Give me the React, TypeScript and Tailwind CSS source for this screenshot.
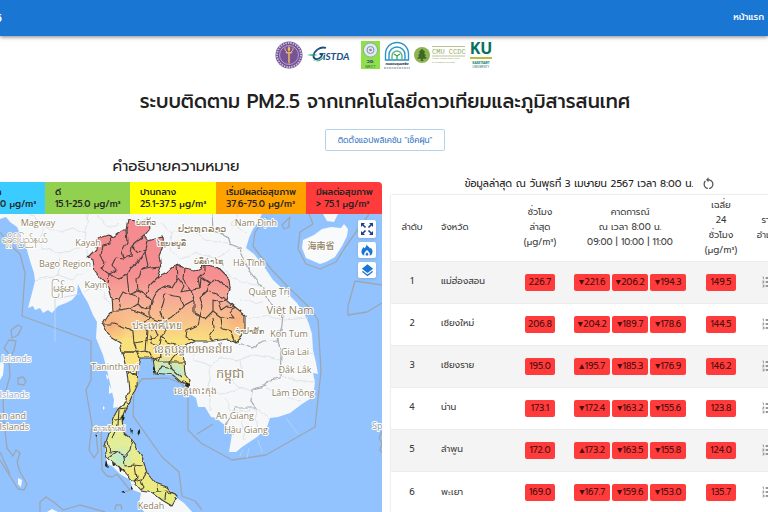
import { MdLayers, MdFormatListNumbered, MdRestartAlt } from "react-icons/md";
import { FaTree } from "react-icons/fa";

const levels = [
  { name: "ดีมาก", range: "0-15.0 μg/m³", color: "w-[75px] bg-[#3bccff]" },
  { name: "ดี", range: "15.1-25.0 μg/m³", color: "w-[85px] bg-[#92d050]" },
  { name: "ปานกลาง", range: "25.1-37.5 μg/m³", color: "w-[86px] bg-[#ffff00]" },
  { name: "เริ่มมีผลต่อสุขภาพ", range: "37.6-75.0 μg/m³", color: "w-[90px] bg-[#ffa200]" },
  { name: "มีผลต่อสุขภาพ", range: "> 75.1 μg/m³", color: "grow bg-[#ff3b3b]" },
];

const provinces = [
  { name: "แม่ฮ่องสอน", now: "226.7", next: ["▼221.6", "▼206.2", "▼194.3"], avg: "149.5" },
  { name: "เชียงใหม่", now: "206.8", next: ["▼204.2", "▼189.7", "▼178.6"], avg: "144.5" },
  { name: "เชียงราย", now: "195.0", next: ["▲195.7", "▼185.3", "▼176.9"], avg: "146.2" },
  { name: "น่าน", now: "173.1", next: ["▼172.4", "▼163.2", "▼155.6"], avg: "123.8" },
  { name: "ลำพูน", now: "172.0", next: ["▲173.2", "▼163.5", "▼155.8"], avg: "124.0" },
  { name: "พะเยา", now: "169.0", next: ["▼167.7", "▼159.6", "▼153.0"], avg: "135.7" },
];

const seas = [
  // Bay of Bengal and Andaman Sea
  "M-30 214 L0 214 L0 219 L6 217 L10 222 L17 227 L21 236 L20 241 L26 246 L28 254 L31 264 L34 273 L35 281 L32 293 L28 308 L33 306 L35 310 L40 308 L43 313 L48 310 L52 313 L58 306 L66 303 L72 300 L77 294 L78 284 L82 293 L88 303 L93 315 L97 322 L96 338 L103 355 L107 370 L111 388 L114 400 L113 408 L118 407 L113 418 L109 432 L105 446 L107 464 L112 466 L120 474 L130 480 L133 490 L141 493 L139 503 L144 512 L-30 512Z",
  // Gulf of Thailand and South China Sea
  "M262 214 L258 222 L253 229 L249 238 L246 248 L254 254 L265 268 L273 280 L287 293 L297 303 L305 315 L309 324 L312 334 L313 350 L316 363 L318 374 L313 373 L315 382 L313 397 L302 404 L290 413 L278 417 L270 418 L267 427 L257 437 L242 447 L236 452 L229 452 L232 434 L227 427 L216 418 L211 417 L205 407 L198 407 L196 398 L190 394 L188 387 L182 383 L173 375 L155 373 L153 358 L140 358 L138 368 L137 385 L128 405 L122 420 L124 433 L132 440 L137 448 L143 460 L147 473 L155 483 L167 487 L177 498 L184 503 L194 514 L382 514 L382 214 L338 214 L334 222 L327 221 L323 214Z",
];

const thailand =
  "M128 220 L138 221 L148 220 L149 230 L144 236 L148 241 L162 237 L163 246 L159 256 L161 267 L157 278 L167 273 L177 264 L184 269 L195 271 L205 265 L217 267 L224 274 L229 279 L230 288 L227 300 L235 307 L245 315 L245 328 L242 337 L235 343 L228 339 L213 341 L195 341 L183 347 L184 362 L185 373 L190 380 L188 387 L182 383 L173 375 L155 373 L153 358 L140 358 L138 368 L137 385 L128 405 L122 420 L124 433 L132 440 L137 448 L143 460 L147 473 L155 483 L167 487 L177 497 L172 506 L162 500 L153 493 L141 491 L133 482 L125 472 L118 466 L110 460 L106 455 L105 446 L109 432 L113 418 L118 409 L125 403 L129 390 L127 373 L122 352 L120 343 L110 337 L103 324 L108 316 L113 311 L112 298 L108 284 L100 278 L95 272 L93 260 L88 257 L96 249 L97 238 L109 234 L112 237 L122 230 L126 230Z";

const provinceLines = [
  "M126 230 L127 242 L122 251 L124 258 L131 256 L132 246 L144 236",
  "M132 246 L138 252 L146 249 L148 241",
  "M110 235 L111 244 L103 246 L101 255 L105 263 L101 268 L109 274 L108 284",
  "M124 258 L116 257 L112 265 L116 271 L109 274 L119 279 L127 275 L131 268 L138 262 L145 252 L146 249",
  "M145 252 L148 266 L142 270 L137 280 L138 291 L129 295 L127 275",
  "M161 267 L151 268 L142 270",
  "M157 278 L149 286 L146 295 L138 291",
  "M112 300 L119 299 L123 292 L129 295 L139 298 L138 304 L142 308 L150 307 L151 300 L146 295",
  "M119 299 L121 311 L130 309 L138 304 M121 311 L113 311",
  "M130 309 L141 313 L150 318 L150 307 L154 297 L158 290 L165 286 L172 288 L178 278 L177 264",
  "M165 294 L163 304 L160 312 L164 322 L150 318",
  "M165 294 L180 297 L183 306 L176 315 L164 322",
  "M178 278 L184 286 L181 292 L191 290 L194 300 L183 306",
  "M184 269 L183 280 L191 290 L200 289 L198 278 L205 271 L205 265",
  "M200 289 L201 277 L210 283 L216 279 L224 285 L230 288",
  "M210 283 L207 291 L200 298 L203 306 L200 316 L194 313 L194 300",
  "M207 291 L216 294 L227 300 L218 302 L213 300 L213 311 L205 319 L200 316",
  "M218 302 L221 310 L227 306 L235 307 L230 313 L234 318 L221 317 L213 311",
  "M221 317 L222 328 L230 331 L235 343",
  "M213 317 L214 328 L209 336 L213 341",
  "M200 316 L198 325 L187 330 L186 337 L195 341",
  "M164 322 L165 332 L161 337 L168 343 L183 347",
  "M103 324 L113 324 L122 327 L133 332 L134 343 L146 341 L147 331 L142 325 L150 318",
  "M147 331 L155 329 L158 336 L146 341 L145 350 L134 352 L122 352",
  "M145 350 L153 358 L160 356 L158 346 L161 337",
  "M134 343 L137 351 L140 358 M158 346 L151 343 L150 335 M153 349 L164 350",
  "M160 356 L158 362 L153 358 M158 362 L170 362 L173 357 L183 347",
  "M170 362 L172 369 L163 367 L156 373 M172 369 L182 378 M170 362 L184 362",
  "M122 352 L138 352 M127 373 L138 375 M126 404 L128 405",
  "M129 373 L138 374 M118 409 L126 408 M114 420 L122 419 M119 410 L118 425 L112 438",
  "M108 441 L110 452 L118 451 L124 457 L130 450 L132 440",
  "M118 451 L112 455 L108 458 M124 457 L125 466 L133 465 L143 466",
  "M135 466 L137 478 L133 482 L141 480 L146 472 M141 480 L144 487 L141 491",
  "M157 485 L158 491 L166 490 L165 500 M158 491 L153 493 M166 490 L172 494",
];

const seaBorders = [
  "M0 232 L8 243 L20 254 L25 273 L22 316 L91 341 L91 380 L86 390 L92 425 L89 450 L94 458 L98 452 L96 434 L101 430 L102 470 L107 476 L112 477 L117 474 L130 490 L123 492",
  "M12 338 L11 330 L18 325 L22 327 L18 335Z",
  "M9 354 L4 348 L9 340 L16 341 L14 350 L9 361 L10 376 L3 401 L4 422 L7 448 L13 456 L16 450 L20 453 L17 462 L20 472 L27 484 L24 490 L18 489 L0 460",
  "M18 384 L18 378 L23 377 L26 381 L24 385Z M0 452 L10 474",
  "M40 512 L40 502 L46 497 L55 503 L63 510 L80 505 L105 512 M115 510 L116 505 L121 505 L122 510",
  "M182 496 L179 472 L162 457 L150 440 L133 416 L134 390 L142 379 L168 378 L182 384 L188 392 L188 430 L201 443 L232 460 L266 455 L315 427 L321 371 L318 320 L310 308 L288 287 L272 270 L259 254 L253 246 L255 232 L267 217",
  "M182 496 L195 501 L202 510",
  "M197 434 L213 424 M290 217 L286 221 L282 225 L284 229 L289 227 L289 223Z",
  "M309 214 L313 224 L300 232 L298 249 L306 264 L320 269 L336 262 L346 246 L369 214",
  "M355 281 L348 306 L348 315 L367 312 L382 303 M355 281 L382 285",
  "M382 431 L379 438 L382 443 L380 450 L382 453",
];

const landBorders = [
  "M212 214 L213 230 L228 236 L230 244 L240 248 L245 262 L250 272 L257 281 L264 290 L270 303 L283 312 L282 326 L278 339 L281 355 L280 378 L270 380 L266 385 L252 390 L251 401 L256 408 L251 408 L236 408 L226 424",
  "M235 343 L247 345 L252 348 L262 342 L277 341 L279 330",
];

const thinBorders = [
  "M30 214 L42 226 L60 232 L73 228 L86 233 M42 226 L42 248 L60 253 L80 248",
  "M60 253 L58 275 L72 280 L88 270 M88 214 L85 240 L88 257 M98 214 L108 228 L120 224",
  "M35 280 L60 275 M84 292 L95 285 L103 293 L110 306 M160 222 L172 232 L190 228 L205 240 L228 244",
  "M172 232 L170 250 L181 259 L195 253 L215 258 L230 250 M215 258 L235 280 L260 286",
  "M237 214 L232 225 L247 233 M240 300 L262 303 M245 318 L265 316 L285 320 L308 318",
  "M195 341 L194 360 L210 365 L220 358 L240 360 L255 355 L280 360 M210 365 L208 388 L222 395 L240 388 L252 392",
  "M240 360 L242 375 L232 380 L240 388 M281 352 L300 350 L313 354 M281 375 L295 380 L315 382 M265 388 L283 395 L302 402",
  "M225 398 L230 410 L245 412 L256 408 L270 418 M240 412 L245 440 M210 390 L210 410 M255 408 L258 432",
];

const labels = [
  { x: 38, y: 226, t: "Magway", size: 9 },
  { x: 24, y: 243, t: "ရခိုင်ပြည်နယ်", size: 10 },
  { x: 88, y: 246, t: "Kayah", size: 9 },
  { x: 65, y: 267, t: "Bago Region", size: 9 },
  { x: 62, y: 292, t: "မြန်မာ", size: 12 },
  { x: 96, y: 288, t: "Kayin", size: 9 },
  { x: 146, y: 225, t: "ບໍ່ແກ້ວ", size: 8 },
  { x: 171, y: 246, t: "ໄຊຍະບູລີ", size: 8 },
  { x: 202, y: 232, t: "ປະເທດລາວ", size: 10 },
  { x: 208, y: 264, t: "ບໍລິຄຳໄຊ", size: 8 },
  { x: 256, y: 226, t: "Nam Định", size: 9 },
  { x: 249, y: 266, t: "Hà Tĩnh", size: 9 },
  { x: 269, y: 295, t: "Quảng Trị", size: 9 },
  { x: 290, y: 314, t: "Việt Nam", size: 11 },
  { x: 321, y: 249, t: "海南省", size: 9 },
  { x: 157, y: 329, t: "ประเทศไทย", size: 10 },
  { x: 249, y: 334, t: "ຈຳປາສັກ", size: 8 },
  { x: 289, y: 337, t: "Kon Tum", size: 9 },
  { x: 193, y: 353, t: "ខេត្តបន្ទាយមានជ័យ", size: 11 },
  { x: 295, y: 355, t: "Gia Lai", size: 9 },
  { x: 295, y: 373, t: "Đắk Lắk", size: 9 },
  { x: 230, y: 378, t: "កម្ពុជា", size: 13 },
  { x: 115, y: 370, t: "Tanintharyi", size: 9 },
  { x: 195, y: 394, t: "ខេត្តកោះកុង", size: 9 },
  { x: 293, y: 396, t: "Lâm Đồng", size: 9 },
  { x: 235, y: 419, t: "An Giang", size: 9 },
  { x: 246, y: 433, t: "Hậu Giang", size: 9 },
  { x: 109, y: 431, t: "อ่าวเจ้าเลย์", size: 7 },
  { x: 151, y: 509, t: "Kedah", size: 9 },
];

const MapView = () => (
  <svg
    viewBox="-30 214 412 298"
    preserveAspectRatio="xMidYMin slice"
    className="block w-full font-['Open_Sans','Noto_Sans','Noto_Sans_CJK_SC',sans-serif]"
  >
    <defs>
      <linearGradient id="pm" gradientUnits="userSpaceOnUse" x1="0" y1="220" x2="0" y2="500">
        <stop offset="0" stopColor="#f28a8f" />
        <stop offset="0.2" stopColor="#f68f91" />
        <stop offset="0.28" stopColor="#f7aa98" />
        <stop offset="0.36" stopColor="#f8c38a" />
        <stop offset="0.43" stopColor="#f9e07c" />
        <stop offset="0.6" stopColor="#f9e878" />
        <stop offset="0.8" stopColor="#e2ee98" />
        <stop offset="0.9" stopColor="#f2ea80" />
        <stop offset="1" stopColor="#e4ec80" />
      </linearGradient>
      <radialGradient id="clean">
        <stop offset="0" stopColor="#b4eadb" />
        <stop offset="1" stopColor="#b4eadb" stopOpacity="0" />
      </radialGradient>
      <radialGradient id="warm">
        <stop offset="0" stopColor="#f6a578" />
        <stop offset="1" stopColor="#f6a578" stopOpacity="0" />
      </radialGradient>
      <filter id="rough" x="-5%" y="-5%" width="110%" height="110%" colorInterpolationFilters="sRGB">
        <feTurbulence type="fractalNoise" baseFrequency="0.15" numOctaves="1" seed="4" />
        <feDisplacementMap in="SourceGraphic" scale="5" xChannelSelector="R" yChannelSelector="G" />
      </filter>
      <clipPath id="country">
        <path d={thailand} />
      </clipPath>
    </defs>
    <rect x="-30" y="214" width="412" height="298" fill="#f5f7f9" />
    <g fill="#92c3ff">
      {seas.map((d) => (
        <path key={d} d={d} />
      ))}
    </g>
    <g fill="#f8fafb">
      <path d="M303 240 L314 235 L322 229 L331 227 L341 228 L344 224 L348 229 L347 236 L342 246 L335 257 L326 262 L320 264 L306 258 L302 248Z" />
      <path d="M0 362 L4 364 L3 375 L0 380Z M18 478 L22 480 L21 487 L18 484Z M47 512 L52 509 L58 512Z" />
      <path d="M106 374 L109 377 L107 380Z M109 385 L113 392 L109 394Z M103 406 L105 408 L103 410Z" />
    </g>
    <g fill="none" stroke="#dfe3e7" strokeWidth="1" filter="url(#rough)">
      {thinBorders.map((d) => (
        <path key={d} d={d} />
      ))}
    </g>
    <g fill="none" stroke="#9ca6b3" strokeWidth="1.3" strokeLinejoin="round">
      {seaBorders.map((d) => (
        <path key={d} d={d} />
      ))}
    </g>
    <path
      d="M55 298 L55 342 M55 299 L80 294 M286 418 L298 434 M243 450 L240 456 M258 440 L262 452 M249 448 L247 458"
      fill="none"
      stroke="#bcd6f5"
      strokeWidth="0.8"
    />
    <g fill="none" stroke="#a9acb2" strokeWidth="1.2" filter="url(#rough)">
      {landBorders.map((d) => (
        <path key={d} d={d} />
      ))}
    </g>
    <g filter="url(#rough)">
      <path d={thailand} fill="url(#pm)" />
      <g clipPath="url(#country)">
        <circle cx="164" cy="370" r="16" fill="url(#clean)" />
        <circle cx="178" cy="372" r="12" fill="url(#clean)" />
        <circle cx="120" cy="458" r="14" fill="url(#clean)" />
        <circle cx="112" cy="326" r="18" fill="url(#warm)" opacity="0.7" />
        <circle cx="238" cy="322" r="16" fill="url(#warm)" opacity="0.6" />
      </g>
      <g fill="none" stroke="#47403c" strokeWidth="1.1" strokeLinejoin="round">
        <path d={thailand} />
        {provinceLines.map((d) => (
          <path key={d} d={d} />
        ))}
      </g>
      <g fill="#20241f">
        <path d="M138 431 L140 429 L140 433 L137 437Z M131 429 L133 430 L132 435Z M106 460 L108 468 L105 466Z" />
        <path d="M119 466 L123 471 L120 472Z M123 491 L125 491 L125 493 L121 492Z M131 484 L133 491 L131 489Z M112 462 L116 465 L113 466Z" />
        <path d="M123 416 L125 414 L124 421 L122 422Z M96 435 L98 435 L98 437Z M153 366 L155 370 L153 374Z M183 381 L189 384 L187 387Z" />
      </g>
    </g>
    <g fill="#8f7f64" stroke="#fff" strokeWidth="2" strokeLinejoin="round" paintOrder="stroke" textAnchor="middle" fontWeight="500">
      {labels.map((l) => (
        <text key={l.t} x={l.x} y={l.y} fontSize={l.size}>
          {l.t}
        </text>
      ))}
    </g>
    <g stroke="#fff" strokeWidth="2" strokeLinejoin="round" paintOrder="stroke" textAnchor="end" fontSize="9" fontWeight="500">
      <text x="31" y="362" fill="#92aac8">Preparis Islands</text>
      <text x="29" y="398" fill="#92aac8">Coco Islands</text>
      <text x="26" y="419" fill="#8f7f64">Andaman and</text>
      <text x="29" y="430" fill="#8f7f64">Nicobar Islands</text>
      <text x="372" y="429" fill="#8c9aac" textAnchor="start">Spratly</text>
    </g>
  </svg>
);

const ExpandIcon = () => (
  <svg viewBox="0 0 14 14" className="size-[14px]" fill="currentColor">
    <path d="M1 1h4L1 5z M13 1v4L9 1z M1 13V9l4 4z M13 13H9l4-4z" />
    <path
      d="M2 2l3.500 3.500M12 2L8.500 5.500M2 12l3.500-3.500M12 12L8.500 8.500"
      stroke="currentColor"
      strokeWidth="1.600"
    />
  </svg>
);

const FireIcon = () => (
  <svg viewBox="0 0 14 14" className="size-3" fill="currentColor">
    <path d="M6.500 0C7 3 10 3 10.500 5.500L11.500 4.500C13.500 7 14 9 13 11C12.500 12.300 11.500 13.200 10 13.600C10.800 12 10.500 9.800 7 7C3.500 9.800 3.200 12 4 13.600C2 13 .5 11.500 .5 9C.5 6.500 2 5.500 2.500 3.500L4 5C5.500 4 6.500 2.500 6.500 0z" />
    <path d="M7 9.500C8.500 11 9 12 8.200 13.500H5.800C5 12 5.500 11 7 9.500z" />
  </svg>
);

const Logos = () => (
  <div className="flex h-[30px] items-center justify-center gap-1 pr-1">
    <svg viewBox="0 0 28 28" className="size-7">
      <circle cx="14" cy="14" r="13.5" fill="#6d4b92" />
      <circle cx="14" cy="14" r="12" fill="none" stroke="#c9b9d6" strokeWidth="2" strokeDasharray="1.5 1" />
      <circle cx="14" cy="14" r="9.5" fill="#765396" stroke="#e2d8ea" strokeWidth="0.6" />
      <path d="M13.200 12h1.600v9l-.8 3l-.8-3z M10.500 11h7l-1 1.500h-5z" fill="#e9b45c" />
      <path d="M14 5c2 2.500 1.500 4 0 6c-1.500-2-2-3.500 0-6z" fill="#eeb867" />
      <path d="M10 6.500c-.5 2 .5 3.500 2 4.500M18 6.500c.5 2-.5 3.500-2 4.500" fill="none" stroke="#eeb867" />
    </svg>
    <svg viewBox="0 0 46 20" className="h-5 w-[46px]">
      <path d="M19 3C13 1 7 6 6.500 11c0 4 5 4 7.500 1l1.500-3h-3" fill="none" stroke="#164e87" strokeWidth="1.800" />
      <path d="M0 10c4-1 7-1 11 0c-4 1-7 1-11 0z" fill="#2ba05c" />
      <path d="M5 15c5 2 10 0 13-6c-2 7-7 9-13 6z" fill="#2ba05c" />
      <text x="16" y="15" fontSize="10" fontStyle="italic" fontWeight="bold" fill="#1a4f86" className="font-['Lato',sans-serif]">iSTDA</text>
    </svg>
    <svg viewBox="0 0 19 28" className="ml-1 h-7 w-[19px]">
      <rect width="19" height="28" fill="#8fe04b" />
      <circle cx="9.500" cy="9" r="7" fill="#dfe9ee" stroke="#7f93a9" strokeWidth="1" strokeDasharray="1.5 .6" />
      <circle cx="9.500" cy="9" r="3.500" fill="none" stroke="#7f93a9" strokeWidth="1" />
      <circle cx="9.500" cy="9" r="1.300" fill="#8a7fae" />
      <text x="9.500" y="22" fontSize="5" fontWeight="bold" fill="#3b4f73" textAnchor="middle">วช.</text>
      <text x="9.500" y="27" fontSize="4" fill="#397547" textAnchor="middle">NRCT</text>
    </svg>
    <svg viewBox="0 0 26 28" className="h-7 w-[26px]">
      <g fill="none" stroke="#2a94cb" strokeWidth="1.400">
        <path d="M1.500 19v-6a11.500 11.500 0 0 1 23 0v6z" />
        <path d="M5 19v-5a8 8 0 0 1 16 0v5" />
        <path d="M8 19v-4a5 5 0 0 1 10 0v4" stroke="#58b77b" />
        <path d="M13 19v-5M10 13l3 2l3-2" stroke="#3ca76a" />
      </g>
      <text x="13" y="24" fontSize="3" fontWeight="bold" fill="#27364c" textAnchor="middle">กรมควบคุมมลพิษ</text>
      <path d="M0 27h26" stroke="#7c8590" strokeWidth="1" strokeDasharray="2 .5" />
    </svg>
    <div className="flex items-center gap-[2px]">
      <span className="flex size-4 items-center justify-center rounded-full bg-[#8db451]">
        <FaTree className="size-3 text-[#3f6726]" />
      </span>
      <svg viewBox="0 0 34 18" className="h-[18px] w-[34px]">
        <path d="M0 .5h33M0 10h33" stroke="#a5b878" strokeWidth=".8" />
        <text x="0" y="8" fontSize="7" fill="#94ab62" className="font-['Liberation_Mono',monospace]">CMU CCDC</text>
        <text x="0" y="13" fontSize="2" fill="#a0a86e">Climate Change Data Center</text>
        <text x="0" y="17" fontSize="2" fill="#a0a86e">of Chiangmai University</text>
      </svg>
    </div>
    <svg viewBox="0 0 22 30" className="h-[30px] w-[22px]">
      <text x="11" y="14" fontSize="16" fontWeight="bold" fill="#087060" textAnchor="middle" className="font-['Noto_Sans',sans-serif]">KU</text>
      <path d="M0 18h22" stroke="#b5c13a" strokeWidth="2" />
      <text x="11" y="24" fontSize="3" fontWeight="bold" fill="#287d71" textAnchor="middle">KASETSART</text>
      <text x="11" y="28" fontSize="3" fill="#287d71" textAnchor="middle">UNIVERSITY</text>
    </svg>
  </div>
);

const Pill = ({ value, wide }: { value: string; wide?: boolean }) => (
  <span
    className={`inline-block h-[17px] rounded-xs bg-[#ff3b3b] text-center align-middle leading-[17px] text-[#4a0d0d] ${
      wide ? "w-9" : "w-[30px]"
    }`}
  >
    {value}
  </span>
);

const Table = () => (
  <table className="w-full table-fixed border-collapse text-[9px] text-[#3c3c3c] shadow-[0_0_2px_rgba(0,0,0,0.2)]">
    <colgroup>
      <col className="w-[42px]" />
      <col className="w-[82px]" />
      <col className="w-[50px]" />
      <col className="w-[130px]" />
      <col className="w-[52px]" />
      <col />
    </colgroup>
    <thead>
      <tr className="h-[66px] leading-[15px]">
        <th className="font-normal">ลำดับ</th>
        <th className="pl-2 text-left font-normal">จังหวัด</th>
        <th className="font-normal">
          ชั่วโมง
          <br />
          ล่าสุด
          <br />
          (μg/m³)
        </th>
        <th className="font-normal">
          คาดการณ์
          <br />
          ณ เวลา 8:00 น.
          <br />
          09:00 | 10:00 | 11:00
        </th>
        <th className="font-normal">
          เฉลี่ย
          <br />
          24
          <br />
          ชั่วโมง
          <br />
          (μg/m³)
        </th>
        <th className="font-normal">
          ราย
          <br />
          อำเภอ
        </th>
      </tr>
    </thead>
    <tbody>
      {provinces.map((p, i) => (
        <tr key={p.name} className="h-[42px] border-t border-[#ececec] text-center odd:bg-[#f4f4f4]">
          <td>{i + 1}</td>
          <td className="pl-2 text-left">{p.name}</td>
          <td>
            <Pill value={p.now} />
          </td>
          <td>
            <div className="flex justify-center gap-[2px]">
              {p.next.map((v) => (
                <Pill key={v} value={v} wide />
              ))}
            </div>
          </td>
          <td>
            <Pill value={p.avg} />
          </td>
          <td>
            <button aria-label={p.name} className="align-middle">
              <MdFormatListNumbered className="size-4 text-[#777]" />
            </button>
          </td>
        </tr>
      ))}
    </tbody>
  </table>
);

const App = () => {
  return (
    <div className="h-screen overflow-hidden bg-white font-['Prompt','Kanit','Open_Sans',sans-serif] text-[#212121]">
      <header className="relative flex h-9 items-center justify-between bg-[#1976d2] text-[9px] font-medium text-white shadow-[0_1px_4px_rgba(0,0,0,0.5)]">
        <div className="flex w-[2px] justify-end overflow-hidden text-xs">
          <span>PM2.5</span>
        </div>
        <a href="#" className="pr-1">
          หน้าแรก
        </a>
      </header>
      <div className="-mr-8 -ml-[30px]">
        <div className="flex flex-col items-center pt-1">
          <Logos />
          <h1 className="mt-4 text-[19px] leading-8 font-medium">
            ระบบติดตาม PM2.5 จากเทคโนโลยีดาวเทียมและภูมิสารสนเทศ
          </h1>
          <button className="mt-[11px] h-[22px] w-[120px] rounded-xs border border-[#b5d3e8] text-[8px] whitespace-nowrap text-[#3a7bc8]">
            ติดตั้งแอปพลิเคชัน "เช็คฝุ่น"
          </button>
        </div>
        <main className="mt-1 flex gap-[9px]">
          <section className="w-[412px] shrink-0">
            <h2 className="mb-[5px] text-center text-[15px] leading-[22px]">คำอธิบายความหมาย</h2>
            <div className="flex overflow-hidden rounded-t-sm text-[9px] leading-3 font-medium text-[#222]">
              {levels.map((l) => (
                <div key={l.name} className={`h-8 py-1 pl-[10px] whitespace-nowrap ${l.color}`}>
                  <p>{l.name}</p>
                  <p>{l.range}</p>
                </div>
              ))}
            </div>
            <div className="relative">
              <MapView />
              <div className="absolute top-[6px] right-[6px] flex flex-col items-center gap-1">
                <button aria-label="เต็มจอ" className="flex size-[18px] items-center justify-center rounded-xs bg-white text-[#1d3f8c] shadow">
                  <ExpandIcon />
                </button>
                <button aria-label="จุดความร้อน" className="flex h-4 w-[18px] items-center justify-center rounded-xs bg-white text-[#1976d2] shadow">
                  <FireIcon />
                </button>
                <button aria-label="ชั้นข้อมูล" className="flex h-4 w-[18px] items-center justify-center rounded-xs bg-white text-[#1976d2] shadow">
                  <MdLayers className="size-[15px]" />
                </button>
              </div>
            </div>
          </section>
          <section className="grow pt-4 pr-[10px]">
            <div className="flex h-6 items-center justify-center gap-2 text-[10px]">
              <p>ข้อมูลล่าสุด ณ วันพุธที่ 3 เมษายน 2567 เวลา 8:00 น.</p>
              <button aria-label="รีเฟรช">
                <MdRestartAlt className="size-[15px] text-[#555]" />
              </button>
            </div>
            <Table />
          </section>
        </main>
      </div>
    </div>
  );
};

export default App;
